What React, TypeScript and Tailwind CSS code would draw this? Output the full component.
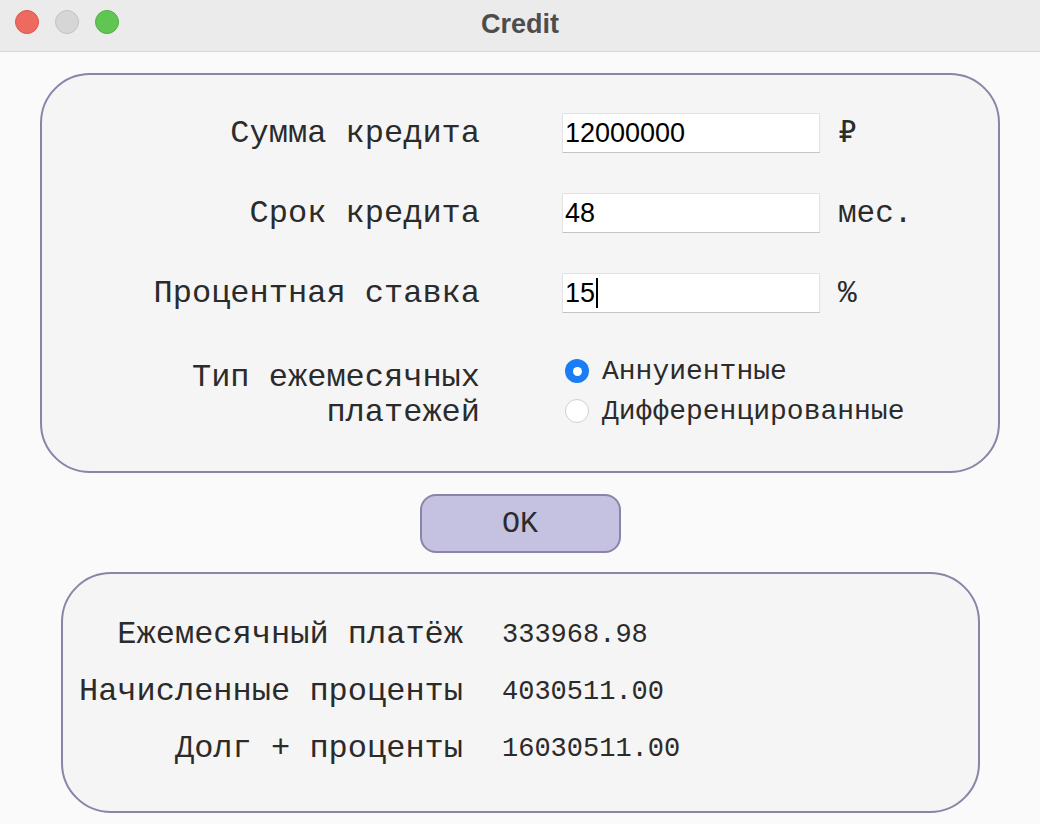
import React from "react";

const mono = { fontFamily: '"Liberation Mono", "Courier New", monospace' };

const Field = ({ label, value, unit, caret }: { label: string; value: string; unit: string; caret?: boolean }) => (
  <div className="flex h-[40px] items-center">
    <div className="w-[438px] pt-[2px] text-right text-[32px] text-[#2b2b2b]" style={mono}>
      {label}
    </div>
    <div className="ml-[82px] flex h-[40px] w-[258px] items-center border border-[#e2e2e2] border-b-[#c4c4c4] bg-white pl-[2px] font-['Liberation_Sans',sans-serif] text-[27px] text-black">
      {value}
      {caret && <span className="ml-[1px] h-[30px] w-[2px] bg-black" />}
    </div>
    <div className="ml-[18px] pt-[2px] text-[31px] text-[#2b2b2b]" style={mono}>
      {unit}
    </div>
  </div>
);

const Result = ({ label, value }: { label: string; value: string }) => (
  <div className="flex h-[57px] items-center pt-[3px]">
    <div className="w-[400px] text-right text-[32px] text-[#2b2b2b]" style={mono}>
      {label}
    </div>
    <div className="ml-[39px] text-[27px] text-[#2b2b2b]" style={mono}>
      {value}
    </div>
  </div>
);

export default function App() {
  return (
    <div className="flex h-[824px] w-[1040px] flex-col overflow-hidden bg-[#fafafa]">
      {/* title bar */}
      <div className="relative flex h-[52px] shrink-0 items-center justify-center border-b border-[#d6d6d6] bg-[#ebebeb] pb-[3px]">
        <div className="absolute left-[15px] top-[10px] flex gap-[16px]">
          <span className="h-[24px] w-[24px] rounded-full border border-[#d9574c] bg-[#ee6a5f]" />
          <span className="h-[24px] w-[24px] rounded-full border border-[#c2c2c2] bg-[#d6d6d6]" />
          <span className="h-[24px] w-[24px] rounded-full border border-[#52ad46] bg-[#61c554]" />
        </div>
        <span className="font-['Liberation_Sans',sans-serif] text-[27px] font-bold text-[#4d4d4d]">Credit</span>
      </div>

      {/* input panel */}
      <div className="mx-[40px] mt-[21px] flex flex-col gap-[40px] rounded-[50px] border-2 border-[#8a85a8] bg-[#f5f5f5] pb-[40px] pt-[38px]">
        <Field label="Сумма кредита" value="12000000" unit="₽" />
        <Field label="Срок кредита" value="48" unit="мес." />
        <Field label="Процентная ставка" value="15" unit="%" caret />

        <div className="-mt-[2px] flex items-start">
          <div className="w-[438px] pt-[9px] text-right text-[32px] leading-[35px] text-[#2b2b2b]" style={mono}>
            Тип ежемесячных
            <br />
            платежей
          </div>
          <div className="ml-[82px] flex flex-col">
            <div className="flex h-[40px] items-center gap-[13px] pl-[3px]">
              <span className="flex h-[24px] w-[24px] items-center justify-center rounded-full bg-[#1a7df5]">
                <span className="h-[9px] w-[9px] rounded-full bg-white" />
              </span>
              <span className="pt-[2px] text-[28px] text-[#2b2b2b]" style={mono}>Аннуиентные</span>
            </div>
            <div className="flex h-[40px] items-center gap-[13px] pl-[3px]">
              <span className="h-[24px] w-[24px] rounded-full border border-[#cfcfcf] bg-white" />
              <span className="pt-[2px] text-[28px] text-[#2b2b2b]" style={mono}>Дифференцированные</span>
            </div>
          </div>
        </div>
      </div>

      {/* button */}
      <div className="mt-[21px] flex justify-center">
        <button className="h-[59px] w-[201px] rounded-[16px] border-2 border-[#8a85a8] bg-[#c5c1e0] pt-[2px] text-[30px] text-[#2b2b2b]" style={mono}>
          OK
        </button>
      </div>

      {/* results panel */}
      <div className="ml-[61px] mt-[19px] flex w-[919px] flex-col rounded-[50px] border-2 border-[#8a85a8] bg-[#f5f5f5] pb-[35px] pt-[31px]">
        <Result label="Ежемесячный платёж" value="333968.98" />
        <Result label="Начисленные проценты" value="4030511.00" />
        <Result label="Долг + проценты" value="16030511.00" />
      </div>
    </div>
  );
}
